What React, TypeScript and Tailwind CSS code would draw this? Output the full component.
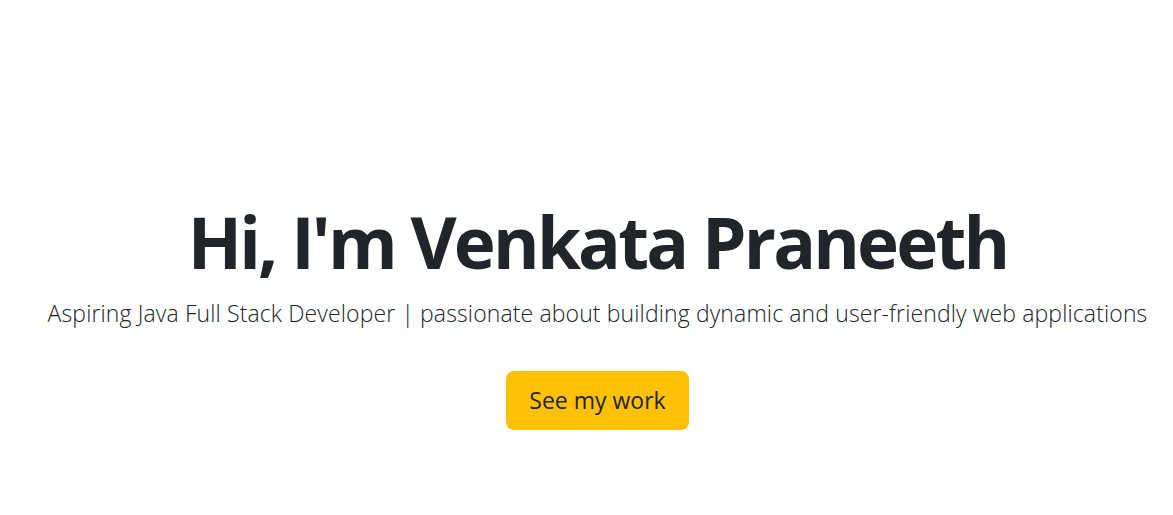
export default function App() {
  return (
    <div
      className="min-h-[515px] bg-white text-center text-[#212529]"
      style={{ fontFamily: '"Open Sans", "Noto Sans", sans-serif' }}
    >
      <section className="flex flex-col items-center pl-[22px] pt-[199px]">
        <h1 className="text-[71px] font-bold leading-[1.2] tracking-[-2.8px]">
          Hi, I'm Venkata Praneeth
        </h1>
        <p className="mt-[12px] text-[23px] font-light leading-[1.5] tracking-[0.12px]">
          Aspiring Java Full Stack Developer | passionate about building dynamic and user-friendly web applications
        </p>
        <button className="mt-[40px] h-[59px] w-[183px] rounded-lg bg-[#ffc107] text-[23px] text-[#212529]">
          See my work
        </button>
      </section>
    </div>
  );
}
